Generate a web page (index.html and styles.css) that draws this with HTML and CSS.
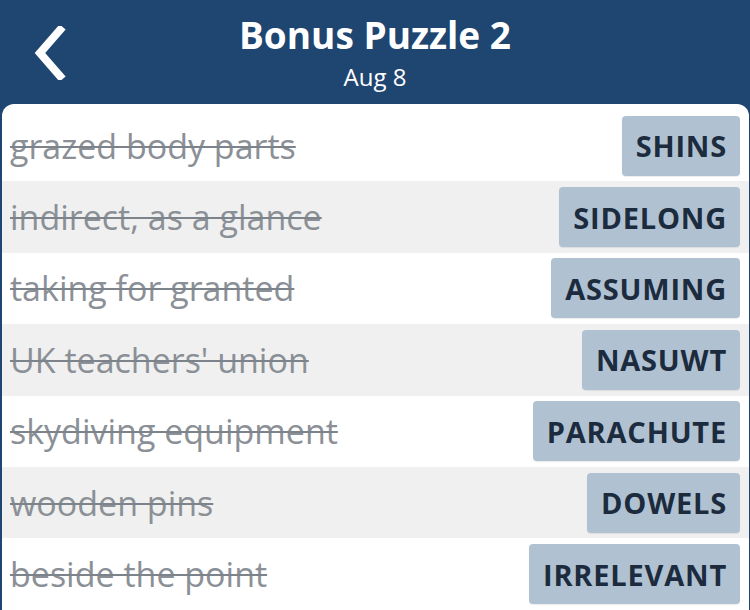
FILE: index.html
```html
<!DOCTYPE html>
<html>
<head>
<meta charset="utf-8">
<link rel="stylesheet" href="styles.css">
</head>
<body>
<div class="app">
  <header class="topbar">
    <button class="back" aria-label="Back">
      <svg width="36" height="54" viewBox="0 0 36 54"><path d="M28 4 L8 27 L28 50" fill="none" stroke="#fff" stroke-width="8" stroke-linecap="square" stroke-linejoin="miter"/></svg>
    </button>
    <div class="titles">
      <div class="title">Bonus Puzzle 2</div>
      <div class="subtitle">Aug 8</div>
    </div>
  </header>
  <main class="card">
    <div class="row"><span class="clue">grazed body parts</span><span class="answer">SHINS</span></div>
    <div class="row alt"><span class="clue">indirect, as a glance</span><span class="answer">SIDELONG</span></div>
    <div class="row"><span class="clue">taking for granted</span><span class="answer">ASSUMING</span></div>
    <div class="row alt"><span class="clue">UK teachers' union</span><span class="answer">NASUWT</span></div>
    <div class="row"><span class="clue">skydiving equipment</span><span class="answer">PARACHUTE</span></div>
    <div class="row alt"><span class="clue">wooden pins</span><span class="answer">DOWELS</span></div>
    <div class="row"><span class="clue">beside the point</span><span class="answer">IRRELEVANT</span></div>
  </main>
</div>
</body>
</html>
```
FILE: styles.css
```css
html, body {
  margin: 0;
  padding: 0;
  background: #1f4571;
  font-family: "Open Sans", "Noto Sans", sans-serif;
  overflow: hidden;
}
.app {
  width: 750px;
  height: 610px;
  display: flex;
  flex-direction: column;
  background: #1f4571;
}
.topbar {
  height: 104px;
  position: relative;
  display: flex;
  justify-content: center;
  align-items: flex-start;
  flex-shrink: 0;
}
.back {
  position: absolute;
  left: 32px;
  top: 26px;
  background: none;
  border: 0;
  padding: 0;
  display: block;
}
.titles {
  text-align: center;
  color: #fff;
  padding-top: 11px;
}
.title {
  font-size: 37px;
  font-weight: 700;
  line-height: 48px;
}
.subtitle {
  font-size: 24px;
  line-height: 30px;
  margin-top: 3px;
}
.card {
  flex: 1;
  background: #fff;
  border-radius: 12px 12px 0 0;
  margin: 0 1px 0 2px;
  padding-top: 6px;
  display: flex;
  flex-direction: column;
  overflow: hidden;
}
.row {
  height: 71.4px;
  flex-shrink: 0;
  display: flex;
  align-items: center;
  justify-content: space-between;
  padding: 0 9px 0 8px;
  box-sizing: border-box;
}
.row.alt {
  background: #f0f0f0;
}
.clue {
  font-size: 34px;
  color: #8b9097;
  text-decoration: line-through;
  text-decoration-color: #7d838b;
  text-decoration-thickness: 2px;
  white-space: nowrap;
}
.answer {
  height: 60px;
  display: flex;
  align-items: center;
  padding: 0 13px 0 14px;
  background: #b0c2d1;
  border-radius: 4px;
  box-shadow: 0 1px 1px rgba(0,0,0,0.08);
  color: #1c2b3d;
  font-size: 29px;
  font-weight: 700;
  letter-spacing: 0.8px;
}
```
